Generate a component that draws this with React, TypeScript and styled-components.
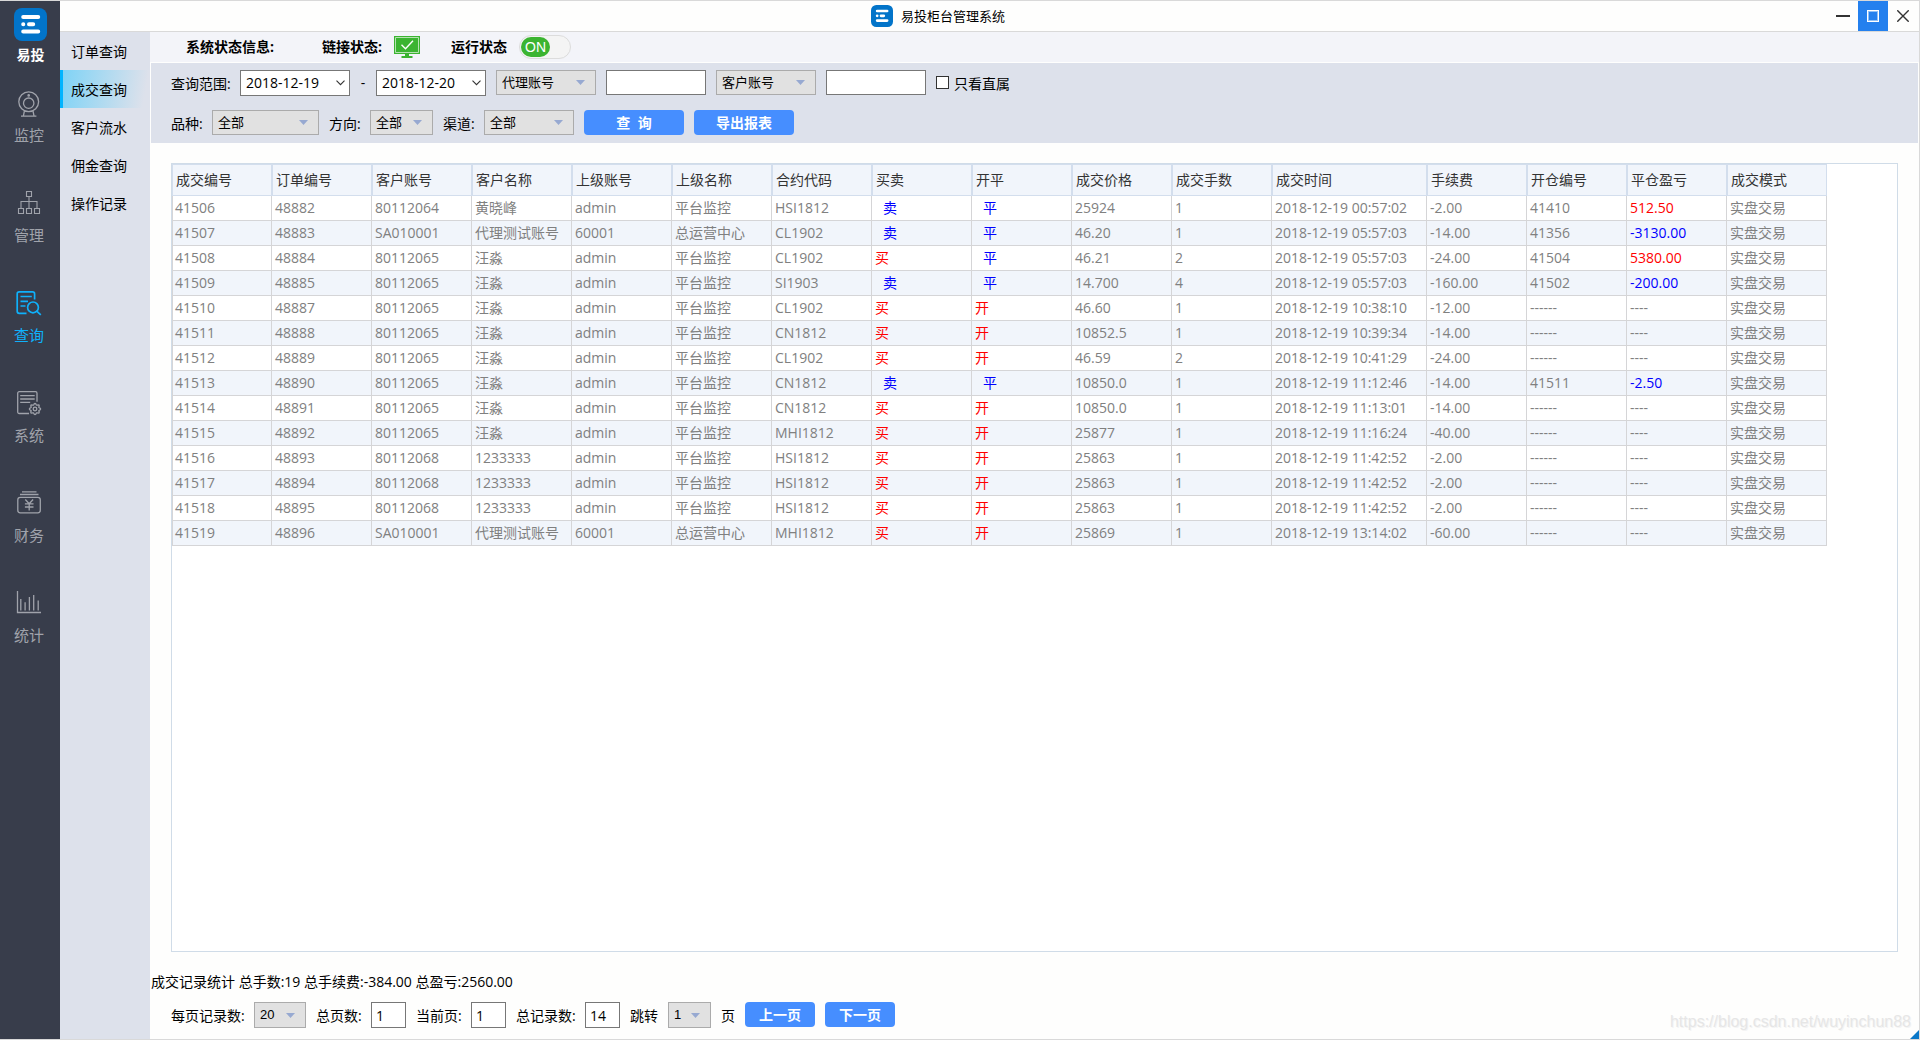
import React, { useState } from "react";
import styled, { createGlobalStyle, css } from "styled-components";

const uiFont = `"Open Sans", "Noto Sans CJK SC", sans-serif`;
const plainFont = `"Liberation Sans", "Noto Sans CJK SC", sans-serif`;

const color = {
  rail: "#383d4b",
  railText: "#a0a3ab",
  accent: "#0fb1fb",
  panel: "#dde1eb",
  strip: "#f3f4f9",
  button: "#468eff",
  frame: "#d9d9d9",
  tableLine: "#d3deed",
  cellLine: "#d5d5d7",
  stripe: "#f1f5fb",
};

const GlobalStyle = createGlobalStyle`
  *, *::before, *::after { box-sizing: border-box; }
  body { margin: 0; background: #fefefd; }
  button, input, select { font: inherit; color: inherit; margin: 0; }
`;

/* ---------- frame ---------- */

const Window = styled.div`
  position: relative;
  display: flex;
  min-height: 100vh;
  border: solid ${color.frame};
  border-width: 1px 1px 1px 0;
  background: #fefefd;
  color: #000;
  font: 14px/20px ${uiFont};
  white-space: nowrap;
`;

const Column = styled.div`
  flex: 1;
  min-width: 0;
  display: flex;
  flex-direction: column;
`;

const TitleBar = styled.header`
  display: flex;
  height: 31px;
  padding-right: 1px;
  border-bottom: 1px solid ${color.frame};
`;

const Title = styled.h1`
  flex: 1;
  display: flex;
  align-items: center;
  justify-content: center;
  gap: 8px;
  margin: 0;
  padding-right: 12px;
  font-size: 13px;
  font-weight: 400;
`;

const WindowButton = styled.button<{ $active?: boolean }>`
  display: grid;
  place-items: center;
  width: 30px;
  height: 30px;
  padding: 0;
  border: 0;
  background: ${(p) => (p.$active ? "#2480ee" : "transparent")};
  color: ${(p) => (p.$active ? "#fff" : "#333")};
`;

const Body = styled.div`
  flex: 1;
  display: flex;
`;

/* ---------- left rail ---------- */

const Rail = styled.nav`
  flex: none;
  width: 60px;
  padding: 7px 2px 0 0;
  background: ${color.rail};
  display: flex;
  flex-direction: column;
  align-items: center;
`;

const Brand = styled.div`
  display: flex;
  flex-direction: column;
  align-items: center;
  gap: 4px;
  height: 83px;
  color: #fff;
  font-weight: 700;
  padding-left: 3px;
`;

const RailItem = styled.button<{ $active?: boolean }>`
  display: flex;
  flex-direction: column;
  align-items: center;
  gap: 8px;
  height: 100px;
  padding: 0;
  border: 0;
  background: none;
  font-size: 15px;
  color: ${(p) => (p.$active ? color.accent : color.railText)};
`;

/* ---------- second level menu ---------- */

const SubMenu = styled.nav`
  flex: none;
  width: 90px;
  background: ${color.panel};
`;

const SubLink = styled.a<{ $active?: boolean }>`
  display: flex;
  align-items: center;
  height: 38px;
  padding: 2px 0 0 8px;
  border-left: 3px solid transparent;
  color: #000;
  text-decoration: none;
  ${(p) =>
    p.$active &&
    css`
      border-left-color: #00b4ff;
      background: linear-gradient(100deg, #7fd3f6 0%, ${color.panel} 92%);
    `}
`;

/* ---------- main area ---------- */

const Main = styled.main`
  flex: 1;
  min-width: 0;
  display: flex;
  flex-direction: column;
`;

const StatusStrip = styled.section`
  display: flex;
  align-items: center;
  height: 30px;
  padding-left: 36px;
  background: ${color.strip};
  font-weight: 700;
`;

const StatusGroup = styled.div<{ $gap: number; $after: number }>`
  display: flex;
  align-items: center;
  gap: ${(p) => p.$gap}px;
  margin-right: ${(p) => p.$after}px;
`;

const Toggle = styled.button`
  width: 52px;
  height: 24px;
  padding: 0 1px;
  border: 1px solid #dcdcdc;
  border-radius: 12px;
  background: #f4f4f4;
  display: flex;
  align-items: center;
`;

const ToggleKnob = styled.span`
  width: 29px;
  border-radius: 10px;
  background: #3bb431;
  color: #fff;
  font: 14px/20px ${plainFont};
  text-align: center;
`;

const Content = styled.div`
  flex: 1;
  min-width: 0;
  display: flex;
  flex-direction: column;
  margin: 1px 1px 0;
`;

const Filters = styled.form`
  display: flex;
  flex-direction: column;
  gap: 14px;
  height: 80px;
  padding: 7px 20px;
  background: ${color.panel};
`;

const Row = styled.div`
  display: flex;
  align-items: flex-start;
  gap: 10px;
  height: 26px;
`;

const Label = styled.label<{ $width?: number }>`
  flex: none;
  width: ${(p) => (p.$width ? `${p.$width}px` : "auto")};
  line-height: 28px;
`;

const Dash = styled.span`
  width: 6px;
  line-height: 26px;
  text-align: center;
`;

const DateBox = styled.div`
  display: flex;
  width: 110px;
  height: 26px;
  border: 1px solid #777;
  background: #fff;
`;

const DateInput = styled.input`
  flex: 1;
  min-width: 0;
  padding: 0 0 0 5px;
  border: 0;
  background: none;
  outline: none;
`;

const DateButton = styled.button`
  display: grid;
  place-items: center;
  width: 17px;
  padding: 0;
  border: 0;
  background: none;
`;

const TextInput = styled.input<{ $width: number; $height?: number }>`
  width: ${(p) => p.$width}px;
  height: ${(p) => p.$height ?? 25}px;
  padding: 0 0 0 4px;
  border: 1px solid #777;
  border-radius: 0;
  background: #fff;
  outline: none;
`;

const SelectBox = styled.div<{ $width: number; $height?: number }>`
  display: grid;
  align-items: center;
  width: ${(p) => p.$width}px;
  height: ${(p) => p.$height ?? 25}px;
  border: 1px solid #ababab;
  background: #e1e1e1;
  svg {
    grid-area: 1 / 1;
    justify-self: end;
    margin-right: 10px;
    pointer-events: none;
  }
`;

const NativeSelect = styled.select`
  grid-area: 1 / 1;
  width: 100%;
  height: 100%;
  padding: 0 0 0 5px;
  border: 0;
  background: none;
  appearance: none;
  outline: none;
  font: 13px/20px ${plainFont};
`;

const CheckLabel = styled.label`
  display: flex;
  gap: 5px;
  line-height: 28px;
`;

const CheckBox = styled.input`
  appearance: none;
  width: 13px;
  height: 13px;
  margin: 6px 0 0;
  border: 1px solid #333;
  background: #fff;
  &:checked {
    background: #333;
    box-shadow: inset 0 0 0 2px #fff;
  }
`;

const Action = styled.button<{ $width: number }>`
  width: ${(p) => p.$width}px;
  height: 25px;
  padding: 0;
  border: 0;
  border-radius: 4px;
  background: ${color.button};
  color: #fff;
  font-weight: 700;
  white-space: pre;
`;

/* ---------- table ---------- */

const TablePanel = styled.section`
  flex: 1;
  margin: 20px 20px 0;
  border: 1px solid #d0dce8;
  background: #fff;
  overflow: auto;
`;

const Table = styled.table`
  table-layout: fixed;
  width: 1655px;
  border-collapse: separate;
  border-spacing: 0;
`;

const Col = styled.col<{ $width: number }>`
  width: ${(p) => p.$width}px;
`;

const HeadCell = styled.th`
  height: 32px;
  padding: 0 0 0 3px;
  border: 1px solid ${color.tableLine};
  background: ${color.stripe};
  color: #333;
  font-weight: 400;
  text-align: left;
`;

type Tone = "buy" | "sell" | "gain" | "loss" | "plain";

const toneColor: Record<Tone, string> = {
  buy: "#f00",
  sell: "#00f",
  gain: "#f00",
  loss: "#00f",
  plain: "#808080",
};

const Cell = styled.td<{ $tone: Tone }>`
  height: 25px;
  padding: 0 0 0 ${(p) => (p.$tone === "sell" ? 11 : 3)}px;
  border: solid ${color.cellLine};
  border-width: 0 1px 1px 0;
  color: ${(p) => toneColor[p.$tone]};
  &:first-child {
    border-left-width: 1px;
    padding-left: 2px;
  }
`;

const BodyRow = styled.tr`
  background: #fff;
  &:nth-child(even) {
    background: ${color.stripe};
  }
`;

/* ---------- footer ---------- */

const Footer = styled.footer`
  padding: 20px 0 11px;
`;

const Summary = styled.p`
  margin: 0 0 10px;
`;

const Pager = styled(Row)`
  padding-left: 20px;
`;

const Watermark = styled.span`
  position: absolute;
  right: 8px;
  bottom: 7px;
  color: #e6e6e6;
  font: 16px/20px ${plainFont};
  text-shadow: 1px 1px 0 #f4f4f4;
`;

const ResizeGrip = styled.span`
  position: absolute;
  right: 0;
  bottom: 0;
  width: 9px;
  height: 9px;
  background: #0a78c8;
  clip-path: polygon(100% 0, 100% 100%, 0 100%);
`;

/* ---------- drawings ---------- */

const Logo = ({ size }: { size: number }) => (
  <svg width={size} height={size} viewBox="0 0 33 33" aria-hidden="true">
    <rect width="33" height="33" rx="8" fill="#0274c9" />
    <g stroke="#fff" strokeWidth="4" strokeLinecap="round">
      <path d="M9.2 9h15M9.2 16.3h.1M15 16.3h4.2M9.2 23.4h15" />
    </g>
  </svg>
);

const Glyph = ({ children, width = 1.3 }: { children: React.ReactNode; width?: number }) => (
  <svg width="26" height="26" viewBox="0 0 26 26" fill="none" stroke="currentColor" strokeWidth={width} aria-hidden="true">
    {children}
  </svg>
);

const gearPath = (() => {
  const points: string[] = [];
  for (let i = 0; i < 48; i++) {
    const a = (i / 48) * Math.PI * 2;
    const r = 4.9 + 0.7 * Math.cos(a * 8);
    points.push(`${(19 + r * Math.cos(a)).toFixed(2)} ${(18 + r * Math.sin(a)).toFixed(2)}`);
  }
  return `M${points.join("L")}Z`;
})();

const railItems = [
  {
    label: "监控",
    icon: (
      <Glyph>
        <circle cx="12.7" cy="10.7" r="9.9" />
        <circle cx="12.7" cy="12.2" r="5.2" />
        <circle cx="12.7" cy="4.4" r="0.7" fill="currentColor" />
        <path d="M8.4 20l-1 4.8M17 20l1 4.8M5 25.1h15.4" />
      </Glyph>
    ),
  },
  {
    label: "管理",
    icon: (
      <Glyph width={1.1}>
        <path d="M10.5.5h5v5h-5zM2.5 17.5h5v5h-5zM10.5 17.5h5v5h-5zM18.5 17.5h5v5h-5zM13 5.5v12M5 17.5v-7h16v7" />
      </Glyph>
    ),
  },
  {
    label: "查询",
    active: true,
    icon: (
      <Glyph width={1.7}>
        <path d="M10.5 22.3H3.2a2 2 0 0 1-2-2V2.9a2 2 0 0 1 2-2h13.4a2 2 0 0 1 2 2V8.5M4.5 5.5h11.3M4.5 10.3h7.5M4.5 15h5" />
        <circle cx="17" cy="16.4" r="5.4" />
        <path d="M21 20.3l3.8 3.5" />
      </Glyph>
    ),
  },
  {
    label: "系统",
    icon: (
      <Glyph>
        <path d="M13 22.5H3.2a1.500 1.500 0 0 1-1.500-1.500V2.200A1.500 1.500 0 0 1 3.200.7h16.300A1.500 1.500 0 0 1 21 2.200v8.500M4.200 4.700h14.500M4.200 8h14.500M4.200 11.300h10" />
        <path d={gearPath} />
        <circle cx="19" cy="18" r="1.8" />
      </Glyph>
    ),
  },
  {
    label: "财务",
    icon: (
      <Glyph>
        <path d="M6 .9h14.500M4 3.500h18.500" />
        <rect x="1.8" y="6.3" width="22.5" height="15.5" rx="2.5" />
        <path d="M9.300 8.500l3.900 4.300 3.900-4.300M13.200 12.800v6.700M8.900 12.900h8.600M8.900 16h8.600" />
      </Glyph>
    ),
  },
  {
    label: "统计",
    icon: (
      <Glyph>
        <path d="M1.500 0v21.500H25M4.800 8v11.500M9.100 11.300v8.200M13.400 6v13.500M17.700 4v15.500M22.200 9.500v10" />
      </Glyph>
    ),
  },
];

const Arrow = () => (
  <svg width="9" height="5" viewBox="0 0 9 5" aria-hidden="true">
    <path d="M0 0h9L4.5 5z" fill="#97a9d1" />
  </svg>
);

const Chevron = () => (
  <svg width="9" height="6" viewBox="0 0 9 6" fill="none" stroke="#333" strokeWidth="1.1" aria-hidden="true">
    <path d="M.5.7l4 4 4-4" />
  </svg>
);

const LinkedMonitor = () => (
  <svg width="26" height="22" viewBox="0 0 26 22" role="img" aria-label="已连接">
    <path d="M0 0h26v18H0zM11 18h4v2h3.5v2h-11v-2H11z" fill="#3bb431" />
    <path d="M1.5 1.5h23v15h-23z" fill="none" stroke="#b5e2b1" />
    <path d="M7.5 8.8l4 4 7.5-8" fill="none" stroke="#fff" strokeWidth="1.4" />
  </svg>
);

/* ---------- controls ---------- */

type SelectProps = { id: string; label?: string; options: string[]; width: number; height?: number };

const Select = ({ id, label, options, width, height }: SelectProps) => (
  <SelectBox $width={width} $height={height}>
    <NativeSelect id={id} aria-label={label}>
      {options.map((o) => (
        <option key={o}>{o}</option>
      ))}
    </NativeSelect>
    <Arrow />
  </SelectBox>
);

const DateField = ({ id, label, value }: { id: string; label?: string; value: string }) => (
  <DateBox>
    <DateInput id={id} aria-label={label} defaultValue={value} />
    <DateButton type="button" aria-label="选择日期">
      <Chevron />
    </DateButton>
  </DateBox>
);

/* ---------- data ---------- */

const subLinks = ["订单查询", "成交查询", "客户流水", "佣金查询", "操作记录"];

const headings = [
  "成交编号", "订单编号", "客户账号", "客户名称", "上级账号", "上级名称", "合约代码", "买卖",
  "开平", "成交价格", "成交手数", "成交时间", "手续费", "开仓编号", "平仓盈亏", "成交模式",
];

const trades = [
  ["41506", "48882", "80112064", "黄晓峰", "admin", "平台监控", "HSI1812", "卖", "平", "25924", "1", "00:57:02", "-2.00", "41410", "512.50"],
  ["41507", "48883", "SA010001", "代理测试账号", "60001", "总运营中心", "CL1902", "卖", "平", "46.20", "1", "05:57:03", "-14.00", "41356", "-3130.00"],
  ["41508", "48884", "80112065", "汪淼", "admin", "平台监控", "CL1902", "买", "平", "46.21", "2", "05:57:03", "-24.00", "41504", "5380.00"],
  ["41509", "48885", "80112065", "汪淼", "admin", "平台监控", "SI1903", "卖", "平", "14.700", "4", "05:57:03", "-160.00", "41502", "-200.00"],
  ["41510", "48887", "80112065", "汪淼", "admin", "平台监控", "CL1902", "买", "开", "46.60", "1", "10:38:10", "-12.00", "------", "----"],
  ["41511", "48888", "80112065", "汪淼", "admin", "平台监控", "CN1812", "买", "开", "10852.5", "1", "10:39:34", "-14.00", "------", "----"],
  ["41512", "48889", "80112065", "汪淼", "admin", "平台监控", "CL1902", "买", "开", "46.59", "2", "10:41:29", "-24.00", "------", "----"],
  ["41513", "48890", "80112065", "汪淼", "admin", "平台监控", "CN1812", "卖", "平", "10850.0", "1", "11:12:46", "-14.00", "41511", "-2.50"],
  ["41514", "48891", "80112065", "汪淼", "admin", "平台监控", "CN1812", "买", "开", "10850.0", "1", "11:13:01", "-14.00", "------", "----"],
  ["41515", "48892", "80112065", "汪淼", "admin", "平台监控", "MHI1812", "买", "开", "25877", "1", "11:16:24", "-40.00", "------", "----"],
  ["41516", "48893", "80112068", "1233333", "admin", "平台监控", "HSI1812", "买", "开", "25863", "1", "11:42:52", "-2.00", "------", "----"],
  ["41517", "48894", "80112068", "1233333", "admin", "平台监控", "HSI1812", "买", "开", "25863", "1", "11:42:52", "-2.00", "------", "----"],
  ["41518", "48895", "80112068", "1233333", "admin", "平台监控", "HSI1812", "买", "开", "25863", "1", "11:42:52", "-2.00", "------", "----"],
  ["41519", "48896", "SA010001", "代理测试账号", "60001", "总运营中心", "MHI1812", "买", "开", "25869", "1", "13:14:02", "-60.00", "------", "----"],
].map((t) => [...t.slice(0, 11), `2018-12-19 ${t[11]}`, ...t.slice(12), "实盘交易"]);

const toneOf = (column: number, value: string): Tone => {
  if (value === "卖" || value === "平") return "sell";
  if (value === "买" || value === "开") return "buy";
  if (column === 14 && value !== "----") return value.startsWith("-") ? "loss" : "gain";
  return "plain";
};

export default function App() {
  const [running, setRunning] = useState(true);

  return (
    <Window>
      <GlobalStyle />
      <Rail aria-label="主菜单">
        <Brand>
          <Logo size={33} />
          易投
        </Brand>
        {railItems.map((item) => (
          <RailItem key={item.label} type="button" $active={item.active}>
            {item.icon}
            {item.label}
          </RailItem>
        ))}
      </Rail>

      <Column>
        <TitleBar>
          <Title>
            <Logo size={22} />
            易投柜台管理系统
          </Title>
          <WindowButton type="button" aria-label="最小化">
            <svg width="14" height="12"><path d="M0 6h14" stroke="currentColor" strokeWidth="2" /></svg>
          </WindowButton>
          <WindowButton type="button" aria-label="最大化" $active>
            <svg width="12" height="12">
              <rect x=".5" y=".5" width="11" height="11" fill="none" stroke="currentColor" />
              <rect x="1.5" y="1.5" width="9" height="9" fill="none" stroke="#8fbff6" />
            </svg>
          </WindowButton>
          <WindowButton type="button" aria-label="关闭">
            <svg width="12" height="12"><path d="M.3.3l11.4 11.4M11.7.3L.3 11.7" stroke="currentColor" strokeWidth="1.4" /></svg>
          </WindowButton>
        </TitleBar>

        <Body>
          <SubMenu aria-label="查询菜单">
            {subLinks.map((text, i) => (
              <SubLink key={text} href="#" $active={i === 1}>
                {text}
              </SubLink>
            ))}
          </SubMenu>

          <Main>
            <StatusStrip>
              <StatusGroup $gap={0} $after={48}>系统状态信息:</StatusGroup>
              <StatusGroup $gap={12} $after={31}>
                链接状态:
                <LinkedMonitor />
              </StatusGroup>
              <StatusGroup $gap={12} $after={0}>
                运行状态
                <Toggle type="button" aria-pressed={running} onClick={() => setRunning(!running)}>
                  <ToggleKnob>{running ? "ON" : "OFF"}</ToggleKnob>
                </Toggle>
              </StatusGroup>
            </StatusStrip>

            <Content>
              <Filters onSubmit={(e) => e.preventDefault()}>
                <Row>
                  <Label $width={59} htmlFor="from">查询范围:</Label>
                  <DateField id="from" value="2018-12-19" />
                  <Dash>-</Dash>
                  <DateField id="to" label="结束日期" value="2018-12-20" />
                  <Select id="agentField" label="代理条件" options={["代理账号"]} width={100} />
                  <TextInput $width={100} aria-label="代理账号" />
                  <Select id="clientField" label="客户条件" options={["客户账号"]} width={100} />
                  <TextInput $width={100} aria-label="客户账号" />
                  <CheckLabel>
                    <CheckBox type="checkbox" />
                    只看直属
                  </CheckLabel>
                </Row>
                <Row>
                  <Label $width={31} htmlFor="product">品种:</Label>
                  <Select id="product" options={["全部"]} width={107} />
                  <Label $width={31} htmlFor="side">方向:</Label>
                  <Select id="side" options={["全部"]} width={63} />
                  <Label $width={31} htmlFor="channel">渠道:</Label>
                  <Select id="channel" options={["全部"]} width={90} />
                  <Action $width={100} type="submit">{"查  询"}</Action>
                  <Action $width={100} type="button">导出报表</Action>
                </Row>
              </Filters>

              <TablePanel>
                <Table>
                  <colgroup>
                    {headings.map((h) => (
                      <Col key={h} $width={h === "成交时间" ? 155 : 100} />
                    ))}
                  </colgroup>
                  <thead>
                    <tr>
                      {headings.map((h) => (
                        <HeadCell key={h} scope="col">{h}</HeadCell>
                      ))}
                    </tr>
                  </thead>
                  <tbody>
                    {trades.map((row) => (
                      <BodyRow key={row[0]}>
                        {row.map((value, i) => (
                          <Cell key={headings[i]} $tone={toneOf(i, value)}>{value}</Cell>
                        ))}
                      </BodyRow>
                    ))}
                  </tbody>
                </Table>
              </TablePanel>

              <Footer>
                <Summary>成交记录统计 总手数:19 总手续费:-384.00 总盈亏:2560.00</Summary>
                <Pager>
                  <Label $width={73} htmlFor="pageSize">每页记录数:</Label>
                  <Select id="pageSize" options={["20"]} width={52} height={26} />
                  <Label $width={45} htmlFor="pages">总页数:</Label>
                  <TextInput id="pages" $width={35} $height={26} defaultValue="1" />
                  <Label $width={45} htmlFor="page">当前页:</Label>
                  <TextInput id="page" $width={35} $height={26} defaultValue="1" />
                  <Label $width={59} htmlFor="total">总记录数:</Label>
                  <TextInput id="total" $width={35} $height={26} defaultValue="14" />
                  <Label htmlFor="jump">跳转</Label>
                  <Select id="jump" options={["1"]} width={43} height={26} />
                  <Label htmlFor="jump">页</Label>
                  <Action $width={70} type="button">上一页</Action>
                  <Action $width={70} type="button">下一页</Action>
                </Pager>
              </Footer>
            </Content>
          </Main>
        </Body>
      </Column>
      <Watermark>https://blog.csdn.net/wuyinchun88</Watermark>
      <ResizeGrip />
    </Window>
  );
}
